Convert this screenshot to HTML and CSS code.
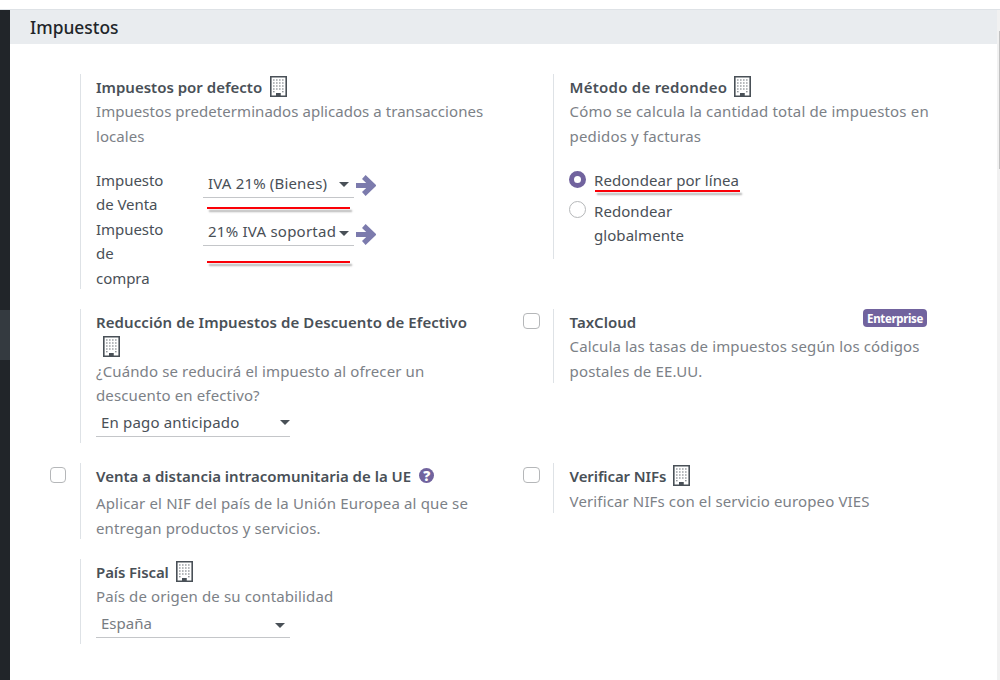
FILE: index.html
```html
<!DOCTYPE html>
<html lang="es">
<head>
<meta charset="utf-8">
<title>Impuestos</title>
<link rel="stylesheet" href="styles.css">
</head>
<body>
<svg class="defs" aria-hidden="true">
  <symbol id="building" viewBox="0 0 17 21">
    <path fill-rule="evenodd" d="M0 0H17V21H0ZM1.6 1.6V19.4H6V17H10.5V19.4H15.4V1.6Z"/>
    <path d="M6 17H10.5V20H6Z"/>
    <path d="M3 4H14M3 7H14M3 10H14M3 13H14M3 15.8H5M12 15.8H14" fill="none" stroke="currentColor" stroke-opacity=".8" stroke-width="1.1" stroke-dasharray="1.6 1.4"/>
  </symbol>
  <symbol id="arrow" viewBox="0 0 20 21">
    <path d="M0 10.5H16M7.8 2L16.7 10.5L7.8 19" fill="none" stroke="currentColor" stroke-width="5.2"/>
  </symbol>
</svg>
<div class="topbar"></div>
<div class="app">
  <nav class="sidebar"><div class="sidebar-active"></div></nav>
  <main class="main">
    <h2 class="header"><span class="t-head">Impuestos</span></h2>
    <div class="grid">
      <section class="setting r1">
        <div class="left"></div>
        <div class="right">
          <div class="title"><span class="t1">Impuestos por defecto</span><svg class="building"><use href="#building"/></svg></div>
          <p class="muted t2">Impuestos predeterminados aplicados a transacciones<br>locales</p>
          <div class="fields">
            <div class="field tall2"><label>Impuesto<br>de Venta</label>
              <div class="select small"><span class="t3">IVA 21% (Bienes)</span><i class="caret"></i><b class="mark m1"></b></div>
              <svg class="arrow"><use href="#arrow"/></svg></div>
            <div class="field tall3"><label>Impuesto<br>de<br>compra</label>
              <div class="select small second"><span class="t4">21% IVA soportad</span><i class="caret"></i><b class="mark m2"></b></div>
              <svg class="arrow"><use href="#arrow"/></svg></div>
          </div>
        </div>
      </section>
      <section class="setting second-col short1">
        <div class="left"></div>
        <div class="right">
          <div class="title"><span class="t5">Método de redondeo</span><svg class="building"><use href="#building"/></svg></div>
          <p class="muted t6">Cómo se calcula la cantidad total de impuestos en<br>pedidos y facturas</p>
          <div class="radios">
            <div class="radio"><span class="dot on"></span><span class="t7">Redondear por línea<b class="mark m3"></b></span></div>
            <div class="radio"><span class="dot"></span><span class="t7">Redondear<br>globalmente</span></div>
          </div>
        </div>
      </section>
      <section class="setting r2">
        <div class="left"></div>
        <div class="right">
          <div class="title"><span class="t8">Reducción de Impuestos de Descuento de Efectivo</span></div>
          <div class="title"><svg class="building"><use href="#building"/></svg></div>
          <p class="muted t9">¿Cuándo se reducirá el impuesto al ofrecer un<br>descuento en efectivo?</p>
          <div class="select wide"><span class="t10">En pago anticipado</span><i class="caret"></i></div>
        </div>
      </section>
      <section class="setting second-col short2">
        <div class="left"><span class="check"></span></div>
        <div class="right">
          <div class="title spread"><span class="t11">TaxCloud</span><span class="badge">Enterprise</span></div>
          <p class="muted t12">Calcula las tasas de impuestos según los códigos<br>postales de EE.UU.</p>
        </div>
      </section>
      <section class="setting r3">
        <div class="left"><span class="check"></span></div>
        <div class="right">
          <div class="title help-title"><span class="t13">Venta a distancia intracomunitaria de la UE</span><span class="help">?</span></div>
          <p class="muted t14">Aplicar el NIF del país de la Unión Europea al que se<br>entregan productos y servicios.</p>
        </div>
      </section>
      <section class="setting second-col short3">
        <div class="left"><span class="check"></span></div>
        <div class="right">
          <div class="title"><span class="t15">Verificar NIFs</span><svg class="building"><use href="#building"/></svg></div>
          <p class="muted t16">Verificar NIFs con el servicio europeo VIES</p>
        </div>
      </section>
      <section class="setting r4">
        <div class="left"></div>
        <div class="right">
          <div class="title"><span class="t17">País Fiscal</span><svg class="building"><use href="#building"/></svg></div>
          <p class="muted t18">País de origen de su contabilidad</p>
          <div class="select wide country"><span class="t19">España</span><i class="caret"></i></div>
        </div>
      </section>
    </div>
  </main>
  <div class="scrollbar"><div class="thumb"></div></div>
</div>
</body>
</html>
```
FILE: styles.css
```css
* { box-sizing: border-box; }
body { margin: 0; height: 680px; overflow: hidden; background: #fff; color: #495057; font: 15px/24.5px "Noto Sans", "Open Sans", sans-serif; white-space: nowrap; }
.defs { position: absolute; width: 0; height: 0; }
p { margin: 0; }
.topbar { height: 10px; border-bottom: 1px solid #dee2e6; }
.app { display: flex; height: 670px; }
.sidebar { width: 10px; background: #212529; padding-top: 300px; }
.sidebar-active { height: 50px; background: #343a40; }
.main { width: 987px; }
.scrollbar { width: 3px; background: #f1f1f1; padding: 21px 0 0 2px; }
.thumb { height: 138px; background: #c1c1c1; }
.header { margin: 0; height: 34px; padding-left: 20px; background: #e9ecef; color: #212529; font-size: 17.4px; line-height: 34px; font-weight: 500; }
.grid { display: grid; grid-template-columns: 473px 474px; grid-template-rows: 215px 134px 76px 85px; row-gap: 20px; padding: 30px 0 0 40px; align-items: start; }
.setting { display: flex; }
.left { width: 30px; padding-top: 4px; }
.right { width: 390px; height: 100%; border-left: 1px solid #dee2e6; padding: 1px 0 0 15px; }
.second-col .right { padding-left: 15.6px; }
.r1 { height: 215px; }
.short1 { height: 185px; }
.r2 { height: 134px; }
.short2 { height: 74px; }
.r3 { height: 76px; }
.short3 { height: 50px; }
.r4 { height: 85px; }
.title { display: flex; height: 24.5px; font-weight: 600; }
.building { width: 17px; height: 21px; margin: 1px 0 0 7px; fill: currentColor; }
.t1 + .building { margin-left: 8px; }
.muted { color: #7c8187; margin-top: -.5px; }
.short3 .muted { margin-top: 0; }
.fields { padding-top: 19.5px; }
.field { display: flex; }
.tall2 { height: 49px; }
.tall3 { height: 73.5px; }
.field label { width: 107px; letter-spacing: -.05px; }
.select { position: relative; display: flex; justify-content: space-between; align-items: center; border-bottom: 1px solid #c4c6c9; padding: 0 5px; }
.small { width: 151px; height: 28px; margin-top: 2px; }
.second { margin-top: 1px; }
.wide { width: 194px; height: 28px; margin-top: 1.5px; padding-right: 0; }
.country { color: #777c82; padding-right: 5px; }
.caret { flex: none; border: 5px solid transparent; border-top-color: #495057; border-bottom: 0; }
.small .caret { margin-top: 2px; }
.second .caret { margin-top: 4px; }
.country .caret { margin-top: 3px; }
.arrow { width: 20px; height: 21px; margin: 7px 0 0 2px; color: #7c7bad; }
.mark { position: absolute; height: 2px; background: #fb0007; box-shadow: 2px 3px 2px rgba(0,0,0,.3); }
.m1 { left: 4px; top: 37px; width: 143px; }
.m2 { left: 4px; top: 43px; width: 143px; }
.m3 { left: 1px; top: 22px; width: 145px; }
.radios { padding-top: 19.5px; display: grid; row-gap: 6.5px; }
.radio { display: flex; gap: 8px; }
.radio > span { position: relative; }
.dot { width: 17px; height: 17px; margin: 2.5px 0 0 -.6px; border: 1px solid #b5b7b9; border-radius: 50%; }
.dot.on { border: 5px solid #71639e; margin-top: 3px; }
.check { display: block; width: 17px; height: 16px; border: 1px solid #b5b7b9; border-radius: 4px; }
.r3 .check { width: 16px; }
.spread { justify-content: space-between; padding-right: 16px; }
.badge { width: 64px; height: 18px; margin-top: -1px; border-radius: 4px; background: #71639e; color: #fff; font-size: 11.5px; letter-spacing: -.35px; line-height: 19px; text-align: center; font-weight: 700; }
.help-title { height: 27.5px; }
.help { width: 15px; height: 15px; margin: 4px 0 0 8px; border-radius: 50%; background: #71639e; color: #fff; font-size: 14px; line-height: 15px; font-weight: 900; text-align: center; }
.t2 { letter-spacing: .05px; }
.t3, .t10 { letter-spacing: .17px; }
.t4, .t5 { letter-spacing: .24px; }
.t6 { letter-spacing: .16px; }
.t14 { letter-spacing: .15px; }
.t7 { letter-spacing: .06px; }
.t8 { letter-spacing: .08px; }
.t9, .t12, .t16, .t18 { letter-spacing: .13px; }
.t15, .t17 { letter-spacing: -.1px; }
```
